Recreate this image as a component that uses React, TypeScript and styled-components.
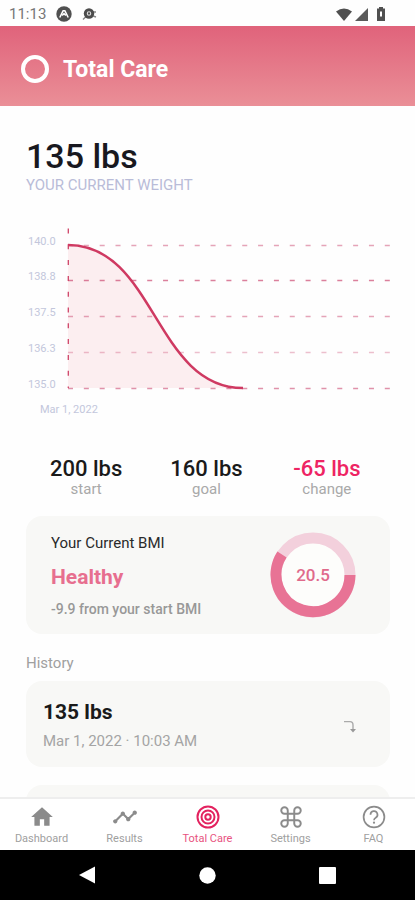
import React from "react";
import styled, { createGlobalStyle } from "styled-components";
import { MdHome, MdTimeline } from "react-icons/md";
import { FiCommand } from "react-icons/fi";

const GlobalStyle = createGlobalStyle`
  * { box-sizing: border-box; }
  body { margin: 0; background: #fefefe; font-family: Roboto, "Noto Sans", sans-serif; }
  h1, h2, h3, p, dl, dt, dd { margin: 0; padding: 0; }
  svg { display: block; }
`;

const Screen = styled.div`
  height: 100vh;
  display: flex;
  flex-direction: column;
  overflow: hidden;
`;

const StatusBar = styled.div`
  flex: none;
  display: flex;
  align-items: center;
  justify-content: space-between;
  height: 26px;
  padding: 2px 27px 0 9px;
  color: #777;
  font-size: 15px;
`;

const StatusGroup = styled.div<{ $gap: number }>`
  display: flex;
  align-items: center;
  gap: ${(p) => p.$gap}px;
`;

const Header = styled.header`
  flex: none;
  display: flex;
  align-items: center;
  gap: 14px;
  height: 80px;
  padding: 6px 21px 0;
  color: #fff;
  background: linear-gradient(#e0637b, #ea8f97);
`;

const Ring = styled.span`
  width: 28px;
  height: 28px;
  border: 4px solid #fff;
  border-radius: 50%;
`;

const Title = styled.h1`
  padding-top: 2px;
  font-size: 23px;
  line-height: 28px;
  font-weight: 700;
`;

const Content = styled.main`
  flex: 1;
  min-height: 0;
  overflow: hidden;
  padding: 30px 25px 0 26px;
`;

const Weight = styled.h2`
  font-size: 34px;
  line-height: 40px;
  font-weight: 500;
  color: #18181f;
`;

const WeightLabel = styled.p`
  font-size: 15px;
  line-height: 18px;
  color: #b9bcd8;
`;

const Chart = styled.svg`
  width: 100%;
  height: auto;
  margin-top: 34px;
  font-size: 11px;
  fill: #c3c7dc;
`;

const Stats = styled.dl`
  display: grid;
  grid-template-columns: repeat(3, 1fr);
  margin-top: 39px;
  padding-right: 3px;
  text-align: center;
`;

const Stat = styled.div`
  display: flex;
  flex-direction: column-reverse;
`;

const StatValue = styled.dd<{ $accent?: boolean }>`
  font-size: 22px;
  line-height: 23px;
  font-weight: 500;
  color: ${(p) => (p.$accent ? "#ee2463" : "#1a1a1a")};
`;

const StatLabel = styled.dt`
  font-size: 15px;
  line-height: 18px;
  color: #a9a9a9;
`;

const Card = styled.section`
  display: flex;
  align-items: center;
  justify-content: space-between;
  min-height: 86px;
  padding: 17px 34px 16px 17px;
  border-radius: 16px;
  background: #f8f8f6;
`;

const BmiCard = styled(Card)`
  margin-top: 18px;
  padding: 16px 34px 16px 25px;
`;

const BmiTitle = styled.h3`
  font-size: 15px;
  line-height: 20px;
  font-weight: 400;
  color: #2a2a2a;
`;

const BmiStatus = styled.p`
  margin: 12px 0;
  font-size: 21px;
  line-height: 24px;
  font-weight: 700;
  color: #e76f8f;
`;

const BmiNote = styled.p`
  font-size: 14px;
  line-height: 16px;
  font-weight: 500;
  color: #989898;
`;

const Gauge = styled.svg`
  width: 86px;
  height: 86px;
  font-size: 17px;
  font-weight: 500;
`;

const SectionTitle = styled.h2`
  margin: 19px 0 8px;
  font-size: 15px;
  line-height: 20px;
  font-weight: 400;
  color: #a0a0a0;
`;

const HistoryList = styled.div`
  display: flex;
  flex-direction: column;
  gap: 18px;
`;

const EntryWeight = styled.h3`
  margin-bottom: 5px;
  font-size: 21px;
  line-height: 28px;
  font-weight: 700;
  color: #1a1a1a;
`;

const EntryDate = styled.p`
  font-size: 15px;
  line-height: 20px;
  color: #a4a4a4;
`;

const TabBar = styled.nav`
  flex: none;
  display: grid;
  grid-template-columns: repeat(5, 1fr);
  height: 53px;
  border-top: 2px solid #eee;
  background: #fff;
`;

const Tab = styled.a<{ $active?: boolean }>`
  display: flex;
  flex-direction: column;
  align-items: center;
  gap: 3px;
  padding-top: 5px;
  font-size: 11px;
  line-height: 12px;
  text-decoration: none;
  white-space: nowrap;
  color: ${(p) => (p.$active ? "#e3225f" : "#8b8b8b")};
`;

const TabLabel = styled.span<{ $active?: boolean }>`
  color: ${(p) => (p.$active ? "#e8537f" : "#a0a0a0")};
`;

const SystemBar = styled.div`
  flex: none;
  display: flex;
  justify-content: space-around;
  align-items: center;
  height: 50px;
  padding: 0 28px;
  background: #000;
`;

const SystemButton = styled.button`
  width: 48px;
  height: 48px;
  padding: 0;
  display: grid;
  place-items: center;
  border: 0;
  background: none;
`;

const TargetIcon = () => (
  <svg width="26" height="26" viewBox="0 0 26 26" fill="none" stroke="currentColor" strokeWidth="2">
    <circle cx="13" cy="13" r="10.5" />
    <circle cx="13" cy="13" r="6.5" />
    <circle cx="13" cy="13" r="2.7" />
  </svg>
);

const HelpIcon = () => (
  <svg width="26" height="26" viewBox="0 0 26 26" fill="none" stroke="currentColor" strokeWidth="1.7">
    <circle cx="13" cy="13" r="10.4" />
    <path d="M9.5 10.7a3.5 3.5 0 1 1 5.2 3c-1.2.7-1.7 1.1-1.7 2.5" />
    <circle cx="13" cy="18.7" r="1.1" fill="currentColor" stroke="none" />
  </svg>
);

const gridLines = [
  { y: 17, label: "140.0", opacity: 0.5 },
  { y: 52, label: "138.8", opacity: 0.7 },
  { y: 88, label: "137.5", opacity: 0.5 },
  { y: 124, label: "136.3", opacity: 0.35 },
  { y: 160, label: "135.0", opacity: 0.6 },
];

const WeightChart = () => (
  <Chart viewBox="0 0 364 190" role="img" aria-label="Weight over time">
    <path d="M42 17C129 17 129 160 217 160H42Z" fill="#fceef0" />
    {gridLines.map((line) => (
      <g key={line.label}>
        <text x="2" y={line.y}>{line.label}</text>
        <path
          d={`M42 ${line.y + 0.5}H364`}
          stroke="#cc4a72"
          strokeOpacity={line.opacity}
          strokeWidth="1.4"
          strokeDasharray="5 10.84"
        />
      </g>
    ))}
    <path d="M42.3 0.5V160" stroke="#cf4468" strokeWidth="1.3" strokeDasharray="5 10.8" />
    <path d="M42 17C129 17 129 160 217 160" fill="none" stroke="#cf3a62" strokeWidth="2.5" />
    <text x="14" y="185">Mar 1, 2022</text>
  </Chart>
);

const stats = [
  { value: "200 lbs", label: "start" },
  { value: "160 lbs", label: "goal" },
  { value: "-65 lbs", label: "change", accent: true },
];

const tabs = [
  { label: "Dashboard", icon: <MdHome size={26} /> },
  { label: "Results", icon: <MdTimeline size={26} /> },
  { label: "Total Care", icon: <TargetIcon />, active: true },
  { label: "Settings", icon: <FiCommand size={26} strokeWidth={1.8} /> },
  { label: "FAQ", icon: <HelpIcon /> },
];

export default function App() {
  return (
    <>
      <GlobalStyle />
      <Screen>
        <StatusBar>
          <StatusGroup $gap={10}>
            <span>11:13</span>
            <svg width="16" height="16" viewBox="0 0 16 16">
              <circle cx="8" cy="8" r="7.7" fill="#505050" />
              <path d="M3.8 11.5Q6 7 7.2 4.7h1.6Q10 7 12.2 11.5M6.2 9.6L8 7.6l1.8 2" fill="none" stroke="#fff" strokeWidth="1.5" />
            </svg>
            <svg width="15" height="14" viewBox="0 0 15 14">
              <path d="M1 12.5l3-3M10 5h4M11 9l3 1" stroke="#888" strokeWidth="1.5" />
              <circle cx="7" cy="6.5" r="5.2" fill="#4c4c4c" />
              <circle cx="7" cy="6.5" r="1.7" fill="none" stroke="#ddd" strokeWidth="1.1" />
            </svg>
          </StatusGroup>
          <StatusGroup $gap={3}>
            <svg width="16" height="13" viewBox="0 0 16 13">
              <path d="M0 3.4Q8-2.6 16 3.4L8 13Z" fill="#505050" />
            </svg>
            <svg width="13" height="13" viewBox="0 0 13 13">
              <path d="M13 0V13H0Z" fill="#5a5a5a" />
            </svg>
            <svg width="17" height="14" viewBox="0 0 17 14">
              <path d="M6 1.5h2V0h4v1.5h2V14H6Z" fill="#505050" />
              <path d="M10 4.5v5" stroke="#fff" strokeWidth="2" />
            </svg>
          </StatusGroup>
        </StatusBar>
        <Header>
          <Ring />
          <Title>Total Care</Title>
        </Header>
        <Content>
          <Weight>135 lbs</Weight>
          <WeightLabel>YOUR CURRENT WEIGHT</WeightLabel>
          <WeightChart />
          <Stats>
            {stats.map((s) => (
              <Stat key={s.label}>
                <StatLabel>{s.label}</StatLabel>
                <StatValue $accent={s.accent}>{s.value}</StatValue>
              </Stat>
            ))}
          </Stats>
          <BmiCard>
            <div>
              <BmiTitle>Your Current BMI</BmiTitle>
              <BmiStatus>Healthy</BmiStatus>
              <BmiNote>-9.9 from your start BMI</BmiNote>
            </div>
            <Gauge viewBox="0 0 86 86" role="img" aria-label="BMI 20.5">
              <circle cx="43" cy="43" r="37" fill="#fdfdfb" stroke="#f3d0dc" strokeWidth="11" />
              <path d="M80 43A37 37 0 1 1 12 22.5" fill="none" stroke="#e87395" strokeWidth="11" />
              <text x="43" y="49" textAnchor="middle" fill="#e06a8b">20.5</text>
            </Gauge>
          </BmiCard>
          <SectionTitle>History</SectionTitle>
          <HistoryList>
            <Card>
              <div>
                <EntryWeight>135 lbs</EntryWeight>
                <EntryDate>Mar 1, 2022 · 10:03 AM</EntryDate>
              </div>
              <svg width="12" height="18" viewBox="0 0 12 18" fill="none" stroke="#aaa" strokeWidth="1.4">
                <path d="M0 5.6H6Q9 5.6 9 9V14" />
                <path d="M6 13h6L9 16.5Z" fill="#999" stroke="none" />
              </svg>
            </Card>
            <Card aria-hidden="true" />
          </HistoryList>
        </Content>
        <TabBar>
          {tabs.map((t) => (
            <Tab key={t.label} href="#" $active={t.active} aria-current={t.active ? "page" : undefined}>
              {t.icon}
              <TabLabel $active={t.active}>{t.label}</TabLabel>
            </Tab>
          ))}
        </TabBar>
        <SystemBar>
          <SystemButton aria-label="Back">
            <svg width="17" height="18" viewBox="0 0 17 18"><path d="M0 9L16 0.5V17.5Z" fill="#fff" /></svg>
          </SystemButton>
          <SystemButton aria-label="Home">
            <svg width="17" height="17" viewBox="0 0 17 17"><circle cx="8.5" cy="8.5" r="8.2" fill="#fff" /></svg>
          </SystemButton>
          <SystemButton aria-label="Overview">
            <svg width="17" height="17" viewBox="0 0 17 17"><rect width="17" height="17" rx="1" fill="#fff" /></svg>
          </SystemButton>
        </SystemBar>
      </Screen>
    </>
  );
}
